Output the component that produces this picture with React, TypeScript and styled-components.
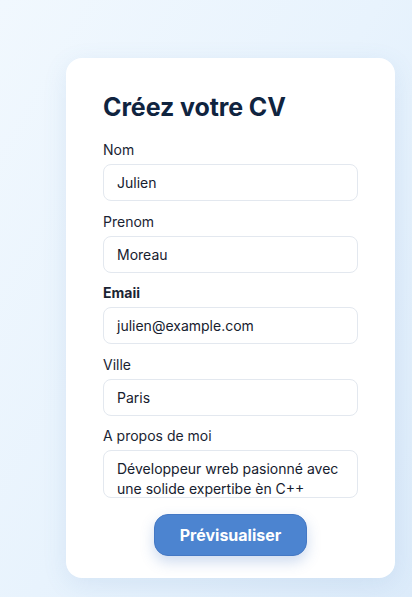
import React from "react";
import styled, { createGlobalStyle } from "styled-components";

const Global = createGlobalStyle`
  html, body { margin: 0; padding: 0; }
  body {
    font-family: Inter, "Noto Sans", "Liberation Sans", sans-serif;
    background: linear-gradient(120deg, #f1f8fe 0%, #e8f3fd 50%, #dcebfa 100%);
    min-height: 597px;
    overflow: hidden;
  }
`;

const Page = styled.div`
  width: 412px;
  height: 597px;
  display: flex;
  justify-content: flex-start;
  padding: 58px 0 0 66px;
  box-sizing: border-box;
`;

const Card = styled.form`
  width: 329px;
  height: 520px;
  box-sizing: border-box;
  background: #ffffff;
  border-radius: 16px;
  box-shadow: 0 6px 24px rgba(80, 130, 190, 0.12);
  padding: 33px 37px 22px;
  display: flex;
  flex-direction: column;
`;

const Title = styled.h1`
  margin: 0 0 18px;
  font-size: 25px;
  line-height: 32px;
  font-weight: 700;
  color: #10243f;
  letter-spacing: -0.1px;
`;

const Label = styled.label<{ $bold?: boolean }>`
  display: block;
  font-size: 14px;
  line-height: 18px;
  font-weight: ${(p) => (p.$bold ? 700 : 400)};
  color: #1a2433;
  margin-bottom: 5px;
`;

const Field = styled.div`
  margin-bottom: 11.5px;
`;

const Input = styled.div`
  height: 37px;
  box-sizing: border-box;
  border: 1px solid #e3e8ef;
  border-radius: 8px;
  padding: 0 13px;
  display: flex;
  align-items: center;
  font-size: 14px;
  color: #16202e;
  background: #fff;
`;

const TextArea = styled.div`
  height: 48px;
  box-sizing: border-box;
  border: 1px solid #e3e8ef;
  border-radius: 8px;
  padding: 8px 10px 0 13px;
  font-size: 14px;
  line-height: 20px;
  color: #16202e;
  overflow: hidden;
`;

const Actions = styled.div`
  display: flex;
  justify-content: center;
  margin-top: 4px;
`;

const Button = styled.button`
  width: 153px;
  height: 42px;
  border: 1px solid #4478c4;
  border-radius: 14px;
  background: #4c84d0;
  color: #fff;
  font-family: inherit;
  font-size: 16px;
  font-weight: 700;
  box-shadow: 0 6px 14px rgba(60, 110, 190, 0.25);
  cursor: pointer;
`;

const fields = [
  { label: "Nom", value: "Julien" },
  { label: "Prenom", value: "Moreau" },
  { label: "Emaii", value: "julien@example.com", bold: true },
  { label: "Ville", value: "Paris" },
];

export default function App() {
  return (
    <>
      <Global />
      <Page>
        <Card onSubmit={(e) => e.preventDefault()}>
          <Title>Créez votre CV</Title>
          {fields.map((f) => (
            <Field key={f.label}>
              <Label $bold={f.bold}>{f.label}</Label>
              <Input>{f.value}</Input>
            </Field>
          ))}
          <Field>
            <Label>A propos de moi</Label>
            <TextArea>
              Développeur wreb pasionné avec une solide expertibe èn C++
            </TextArea>
          </Field>
          <Actions>
            <Button type="button">Prévisualiser</Button>
          </Actions>
        </Card>
      </Page>
    </>
  );
}
